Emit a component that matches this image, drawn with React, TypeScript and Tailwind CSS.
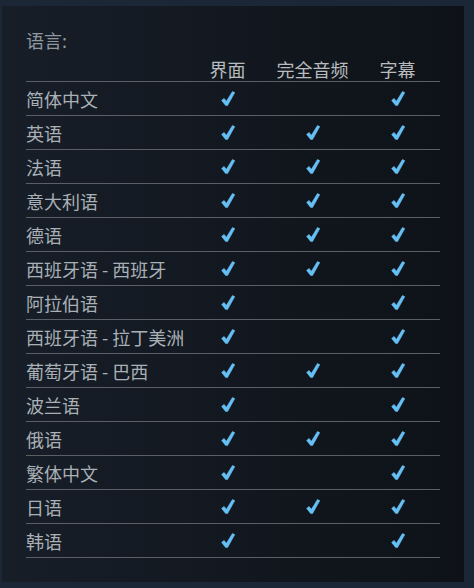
const rows: [string, boolean, boolean, boolean][] = [
  ["简体中文", true, false, true],
  ["英语", true, true, true],
  ["法语", true, true, true],
  ["意大利语", true, true, true],
  ["德语", true, true, true],
  ["西班牙语 - 西班牙", true, true, true],
  ["阿拉伯语", true, false, true],
  ["西班牙语 - 拉丁美洲", true, false, true],
  ["葡萄牙语 - 巴西", true, true, true],
  ["波兰语", true, false, true],
  ["俄语", true, true, true],
  ["繁体中文", true, false, true],
  ["日语", true, true, true],
  ["韩语", true, false, true],
];

function Check() {
  return (
    <svg width="14" height="15" viewBox="0 0 14 15" className="block">
      <path
        d="M0.6 9.4 L3.1 7.4 L5.4 10.3 L11.4 0.6 L13.8 1.6 L6.6 14.4 L4.6 14.4 Z"
        fill="#66c0f4"
        strokeLinejoin="round"
        stroke="#66c0f4"
        strokeWidth="0.6"
      />
    </svg>
  );
}

function Cell({ on }: { on: boolean }) {
  return <div className="flex w-[85px] items-center justify-center">{on && <Check />}</div>;
}

export default function App() {
  return (
    <div
      className="h-[588px] w-[474px] bg-[#1b2636] pl-[2px] pt-[6px]"
      style={{ fontFamily: '"Noto Sans CJK SC", "Noto Sans", sans-serif' }}
    >
      <div className="h-[576px] w-[462px] bg-gradient-to-r from-[#171e28] to-[#0e1218] pl-[24px] pt-[22px]">
        <div className="text-[18px] leading-[24px] text-[#8f98a0]">语言:</div>
        <div className="mt-[5px] w-[414px]">
          <div className="flex h-[25px] border-b border-[#5a5f66] text-[18px] leading-[24px] text-[#b8bcbf]">
            <div className="w-[159px]" />
            <div className="w-[85px] text-center">界面</div>
            <div className="w-[85px] text-center">完全音频</div>
            <div className="w-[85px] text-center">字幕</div>
          </div>
          {rows.map(([name, a, b, c]) => (
            <div
              key={name}
              className="flex h-[34px] items-center border-b border-[#5a5f66] text-[18px] leading-[24px] text-[#a9b0b6]"
            >
              <div className="w-[159px] whitespace-nowrap">{name}</div>
              <Cell on={a} />
              <Cell on={b} />
              <Cell on={c} />
            </div>
          ))}
        </div>
      </div>
    </div>
  );
}
